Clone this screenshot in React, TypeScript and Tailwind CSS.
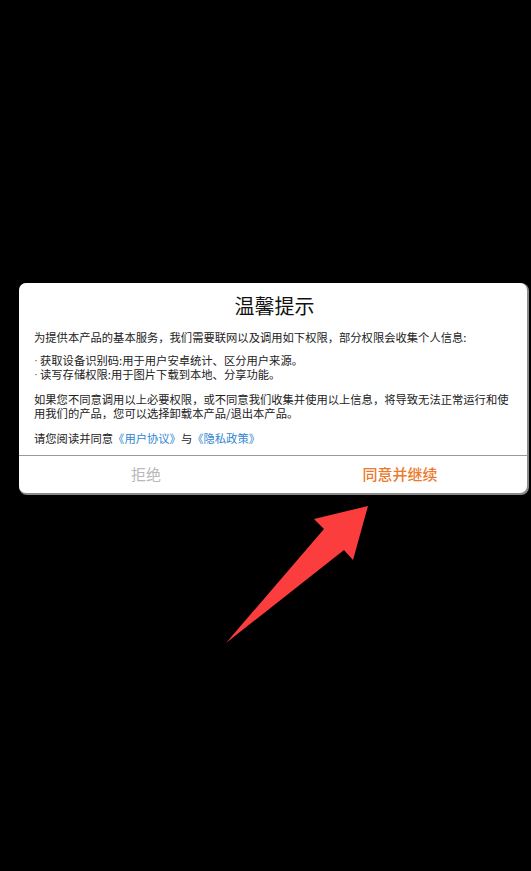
import React from 'react'

const font = { fontFamily: '"Noto Sans CJK SC", "Noto Sans", sans-serif' }

function Arrow() {
    return (
        <svg width="531" height="871" viewBox="0 0 531 871" className="absolute inset-0 pointer-events-none">
            <polygon
                points="368,506 353,560 344,550 226,643 324,529 314,519"
                fill="#fc3d3e"
            />
        </svg>
    )
}

function Bullet({ children }: { children: React.ReactNode }) {
    return (
        <p className="flex">
            <span className="w-[6px] font-['Liberation_Sans'] text-[#555]">·</span>
            <span>{children}</span>
        </p>
    )
}

export default function App() {
    return (
        <div className="relative w-[531px] h-[871px] bg-black overflow-hidden" style={font}>
            <div className="pt-[283px] pl-[19px]">
                <div className="w-[508px] bg-white rounded-[7px] shadow-[1px_1px_0_1px_#8a8a8a]">
                    <div className="pl-[15px] pr-[12px] pt-[11px] pb-[10px]">
                        <h1 className="text-center text-[20px] leading-[24px] text-[#111] mb-[12px]">温馨提示</h1>
                        <div className="text-[11.3px] leading-[14px] text-[#222]">
                            <p className="mb-[9px]">为提供本产品的基本服务，我们需要联网以及调用如下权限，部分权限会收集个人信息:</p>
                            <Bullet>获取设备识别码:用于用户安卓统计、区分用户来源。</Bullet>
                            <div className="mb-[11px]">
                                <Bullet>读写存储权限:用于图片下载到本地、分享功能。</Bullet>
                            </div>
                            <p className="mb-[11px]">如果您不同意调用以上必要权限，或不同意我们收集并使用以上信息，将导致无法正常运行和使用我们的产品，您可以选择卸载本产品/退出本产品。</p>
                            <p>
                                请您阅读并同意
                                <span className="text-[#2f86d4]">《用户协议》</span>
                                与
                                <span className="text-[#2f86d4]">《隐私政策》</span>
                            </p>
                        </div>
                    </div>
                    <div className="flex h-[38px] border-t border-[#9a9a9a]">
                        <button className="flex-1 flex items-center justify-center text-[15px] text-[#b8b8b8]">拒绝</button>
                        <button className="flex-1 flex items-center justify-center text-[15px] font-medium text-[#ec7a2c]">同意并继续</button>
                    </div>
                </div>
            </div>
            <Arrow />
        </div>
    )
}
